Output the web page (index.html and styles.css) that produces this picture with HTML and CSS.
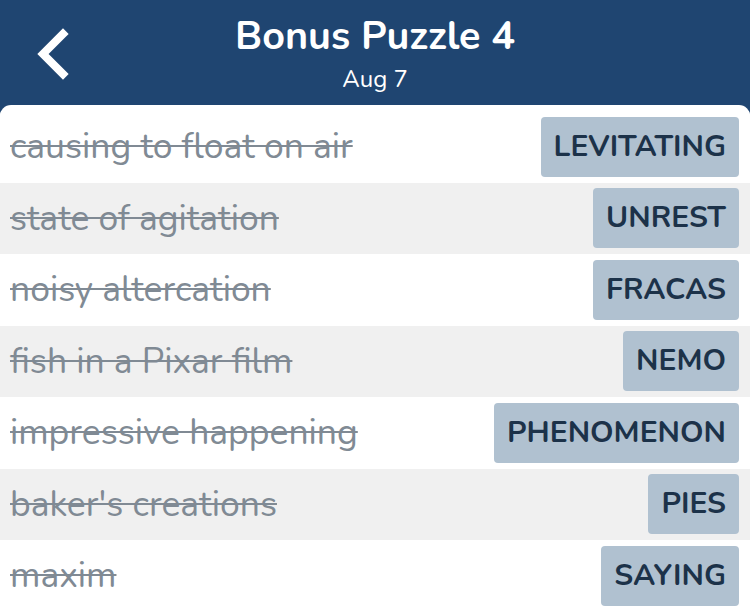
FILE: index.html
```html
<!DOCTYPE html>
<html>
<head>
<meta charset="utf-8">
<link rel="stylesheet" href="styles.css">
</head>
<body>
<div class="app">
  <header class="header">
    <button class="back" aria-label="Back">
      <svg width="50" height="60" viewBox="0 0 50 60"><path d="M33 9 L13 29 L33 49" fill="none" stroke="#fff" stroke-width="8" stroke-linecap="square" stroke-linejoin="miter"/></svg>
    </button>
    <div class="titles">
      <h1 class="title">Bonus Puzzle 4</h1>
      <div class="date">Aug 7</div>
    </div>
  </header>
  <main class="list">
    <div class="row"><span class="clue">causing to float on air</span><span class="answer">LEVITATING</span></div>
    <div class="row alt"><span class="clue">state of agitation</span><span class="answer">UNREST</span></div>
    <div class="row"><span class="clue">noisy altercation</span><span class="answer">FRACAS</span></div>
    <div class="row alt"><span class="clue">fish in a Pixar film</span><span class="answer">NEMO</span></div>
    <div class="row"><span class="clue">impressive happening</span><span class="answer">PHENOMENON</span></div>
    <div class="row alt"><span class="clue">baker's creations</span><span class="answer">PIES</span></div>
    <div class="row"><span class="clue">maxim</span><span class="answer">SAYING</span></div>
  </main>
</div>
</body>
</html>
```
FILE: styles.css
```css
* { box-sizing: border-box; }
html, body { margin: 0; padding: 0; }
body {
  width: 750px;
  height: 607px;
  overflow: hidden;
  background: #1f4571;
  font-family: "Nunito", "Lato", "Noto Sans", sans-serif;
}
.app { display: flex; flex-direction: column; }
.header {
  height: 105px;
  background: #1f4571;
  position: relative;
  display: flex;
  justify-content: center;
}
.back {
  position: absolute;
  left: 30px;
  top: 25px;
  background: none;
  border: 0;
  padding: 0;
}
.titles {
  display: flex;
  flex-direction: column;
  align-items: center;
  padding-top: 12px;
}
.title {
  margin: 0;
  color: #fff;
  font-size: 39.5px;
  font-weight: 700;
  line-height: 48px;
}
.date {
  color: #fff;
  font-size: 24px;
  line-height: 30px;
  margin-top: 4px;
}
.list {
  background: #fff;
  border-radius: 11px 11px 0 0;
  overflow: hidden;
  padding-top: 6px;
}
.row {
  height: 71.5px;
  flex-shrink: 0;
  display: flex;
  align-items: center;
  justify-content: space-between;
  padding: 0 11px 0 10px;
  background: #fff;
}
.row.alt { background: #f0f0f0; }
.clue {
  color: #808a94;
  font-size: 35.5px;
  text-decoration: line-through;
  text-decoration-thickness: 2px;
}
.answer {
  background: #b0c1d0;
  color: #1c3249;
  font-weight: 700;
  font-size: 30px;
  height: 60px;
  line-height: 60px;
  padding: 0 13px;
  border-radius: 4px;
}
```
